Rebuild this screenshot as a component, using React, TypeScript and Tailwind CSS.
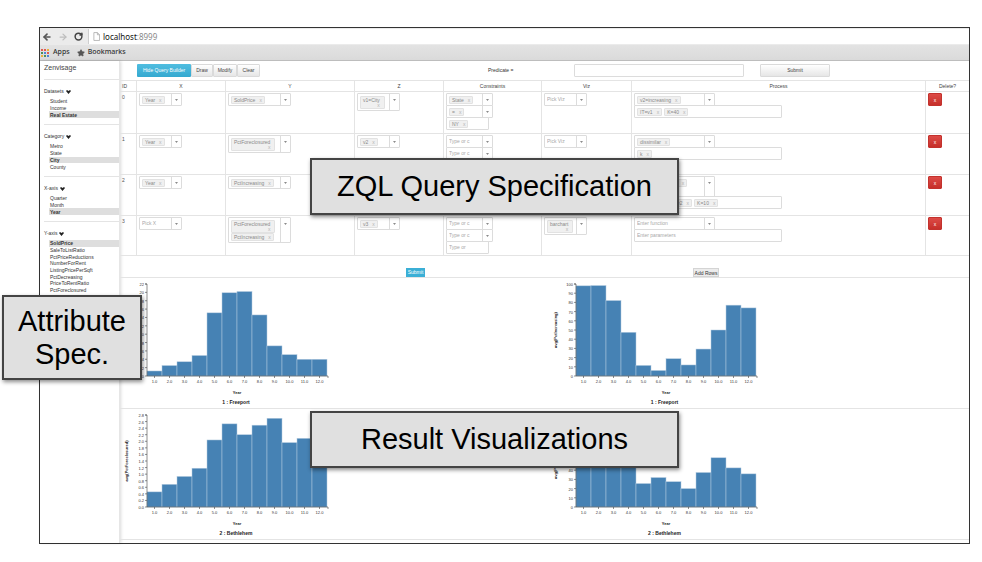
import React from "react";
import { ArrowLeft, ArrowRight, RotateCw, Star } from "lucide-react";

const cx = (...c: (string | false | undefined)[]) => c.filter(Boolean).join(" ");

type TagInfo = { text: string; tall?: boolean };

function Tag({ text, tall }: TagInfo) {
  return (
    <span
      className={cx(
        "flex rounded-[1px] border border-[#e2e2e2] bg-[#f0f0f0] pl-[2px] text-[#8a8a8a]",
        tall ? "h-[13px] flex-col pr-[4px]" : "h-[8px] items-center gap-[4px] pr-[2px]"
      )}
    >
      <span className="whitespace-nowrap leading-[6px]">{text}</span>
      <button
        className={cx("leading-[5px] text-[#b5b5b5]", tall && "self-end")}
        aria-label={"Remove " + text}
      >
        x
      </button>
    </span>
  );
}

type BoxProps = {
  tags?: TagInfo[];
  placeholder?: string;
  label: string;
  width: string;
  arrow?: boolean;
  tall?: string;
};

function TagBox({ tags, placeholder, label, width, arrow = true, tall }: BoxProps) {
  return (
    <div
      className={cx(
        "-mb-px flex rounded-[1px] border border-[#dcdcdc] bg-white text-[5px]",
        width,
        tall || "min-h-[13px]"
      )}
    >
      <div className="flex min-w-0 flex-1 flex-wrap content-start items-start gap-x-[2px] pb-px pl-[2px] pt-[2px]">
        {tags ? (
          tags.map((t) => <Tag key={t.text} {...t} />)
        ) : (
          <input
            aria-label={label}
            placeholder={placeholder}
            className="h-[7px] w-full bg-transparent leading-[7px] outline-none placeholder:text-[#a8a8a8]"
          />
        )}
      </div>
      {arrow && (
        <button
          aria-label={"Open " + label}
          className="flex w-[10px] justify-center border-l border-[#dcdcdc] pt-[5px]"
        >
          <svg viewBox="0 0 4 2" className="h-[2px] w-[3px]">
            <path d="M0 0h4L2 2z" fill="#666" />
          </svg>
        </button>
      )}
    </div>
  );
}

type Cell = { tags?: TagInfo[]; placeholder?: string; tall?: string };
type Row = { x: Cell; y: Cell; z: Cell; constraints: Cell[]; viz: Cell; process: Cell[] };

const tag = (text: string, tall = false): TagInfo => ({ text, tall });
const openConstraints: Cell[] = [
  { placeholder: "Type or c" },
  { placeholder: "Type or c" },
  { placeholder: "Type or" },
];

const rows: Row[] = [
  {
    x: { tags: [tag("Year")] },
    y: { tags: [tag("SoldPrice")] },
    z: { tags: [tag("v1=City", true)] },
    constraints: [{ tags: [tag("State")] }, { tags: [tag("=")] }, { tags: [tag("NY")] }],
    viz: { placeholder: "Pick Viz" },
    process: [{ tags: [tag("v2=increasing")] }, { tags: [tag("IT=v1"), tag("K=40")] }],
  },
  {
    x: { tags: [tag("Year")] },
    y: { tags: [tag("PctForeclosured", true)] },
    z: { tags: [tag("v2")] },
    constraints: openConstraints,
    viz: { placeholder: "Pick Viz" },
    process: [{ tags: [tag("dissimilar")] }, { tags: [tag("k")] }],
  },
  {
    x: { tags: [tag("Year")] },
    y: { tags: [tag("PctIncreasing")] },
    z: { tags: [tag("v2")] },
    constraints: openConstraints,
    viz: { placeholder: "Pick Viz" },
    process: [
      { tags: [tag("v3=dissimilar(v2)")], tall: "h-[21px]" },
      { tags: [tag("IT=v1"), tag("IT2=v2"), tag("K=10")] },
    ],
  },
  {
    x: { placeholder: "Pick X" },
    y: { tags: [tag("PctForeclosured", true), tag("PctIncreasing")] },
    z: { tags: [tag("v3")] },
    constraints: openConstraints,
    viz: { tags: [tag("barchart", true)] },
    process: [{ placeholder: "Enter function" }, { placeholder: "Enter parameters" }],
  },
];

const columns = [
  ["ID", "w-[17px]"],
  ["X", "w-[89px]"],
  ["Y", "w-[129px]"],
  ["Z", "w-[89px]"],
  ["Constraints", "w-[98px]"],
  ["Viz", "w-[90px]"],
  ["Process", ""],
  ["Delete?", "w-[43px]"],
];

const td = "border-b border-r border-[#e4e4e4] pl-[2px] pt-[1px] align-top last:border-r-0";

function QueryTable() {
  return (
    <table className="w-full table-fixed border-separate border-spacing-0 text-[5px] leading-[6px]">
      <thead>
        <tr className="h-[12px]">
          {columns.map(([name, width]) => (
            <th
              key={name}
              className={cx(
                "border-b border-r border-t border-[#e4e4e4] p-0 text-center font-normal text-[#444] last:border-r-0 first:pl-[2px] first:text-left",
                width
              )}
            >
              {name}
            </th>
          ))}
        </tr>
      </thead>
      <tbody>
        {rows.map((r, i) => (
          <tr key={i} className="h-[41px] first:h-[42px] last:h-[40px]">
            <td className="border-b border-r border-[#e4e4e4] pl-[2px] pt-[2px] align-top text-[#555]">{i}</td>
            <td className={td}>
              <TagBox label="X" width="w-[43px]" {...r.x} />
            </td>
            <td className={td}>
              <TagBox label="Y" width="w-[63px]" {...r.y} />
            </td>
            <td className={td}>
              <TagBox label="Z" width="w-[43px]" {...r.z} />
            </td>
            <td className={td}>
              {r.constraints.map((c, k) => (
                <TagBox key={k} label="Constraint" width={k < 2 ? "w-[47px]" : "w-[43px]"} arrow={k < 2} {...c} />
              ))}
            </td>
            <td className={td}>
              <TagBox label="Viz" width="w-[43px]" {...r.viz} />
            </td>
            <td className={td}>
              {r.process.map((c, k) => (
                <TagBox key={k} label="Process" width={k === 0 ? "w-[81px]" : "w-[148px]"} arrow={k === 0} {...c} />
              ))}
            </td>
            <td className={td}>
              <button className="flex h-[13px] w-[14px] items-center justify-center rounded-[1px] border border-[#c3322d] bg-linear-to-b from-[#dd4a46] to-[#c62f2a] text-[5px] text-white">
                x
              </button>
            </td>
          </tr>
        ))}
      </tbody>
    </table>
  );
}

type ChartProps = {
  caption: string;
  yLabel: string;
  max: number;
  step: number;
  digits?: number;
  values: number[];
};

function Chart({ caption, yLabel, max, step, digits = 0, values }: ChartProps) {
  const top = 6;
  const bottom = 98;
  const left = 27;
  const bar = 15;
  const y = (v: number) => bottom - (v / max) * (bottom - top);
  const ticks = Array.from({ length: Math.round(max / step) + 1 }, (_, i) => i * step);
  const right = left + bar * values.length;
  return (
    <figure className="h-[130px] w-[232px]">
      <svg viewBox="0 0 232 120" className="h-[120px] w-[232px]" fontFamily="Liberation Sans, sans-serif">
        {values.map((v, i) => (
          <rect
            key={i}
            x={left + i * bar}
            y={y(v)}
            width={bar}
            height={bottom - y(v)}
            fill="#4682b4"
            stroke="#b4cbe0"
            strokeWidth="0.5"
          />
        ))}
        <path
          d={`M${left - 2} ${top}H${left}V${bottom}H${right + 1}v2`}
          fill="none"
          stroke="#444"
          strokeWidth="0.6"
        />
        {ticks.map((t) => (
          <g key={t}>
            <path d={`M${left - 2} ${y(t)}h2`} stroke="#444" strokeWidth="0.6" />
            <text x={left - 3} y={y(t) + 2} fontSize="4" textAnchor="end" fill="#333">
              {t.toFixed(digits)}
            </text>
          </g>
        ))}
        {values.map((_, i) => {
          const x = left + i * bar + bar / 2;
          return (
            <g key={i}>
              <path d={`M${x} ${bottom}v2`} stroke="#444" strokeWidth="0.6" />
              <text x={x} y="105" fontSize="4" textAnchor="middle" fill="#333">
                {(i + 1).toFixed(1)}
              </text>
            </g>
          );
        })}
        <text x="117" y="116" fontSize="4" fontWeight="bold" textAnchor="middle" fill="#222">
          Year
        </text>
        <text
          transform="translate(8 52) rotate(-90)"
          fontSize="4"
          fontWeight="bold"
          textAnchor="middle"
          fill="#222"
        >
          {yLabel}
        </text>
      </svg>
      <figcaption className="text-center text-[5px] font-bold leading-[8px] text-[#222]">{caption}</figcaption>
    </figure>
  );
}

const charts: ChartProps[][] = [
  [
    {
      caption: "1 : Freeport",
      yLabel: "avg(SoldPrice)",
      max: 22,
      step: 2,
      values: [1.2, 2.5, 3.4, 4.9, 15.1, 19.9, 20.2, 14.6, 7.2, 5.1, 4, 4],
    },
    {
      caption: "1 : Freeport",
      yLabel: "avg(PctIncreasing)",
      max: 100,
      step: 10,
      values: [98, 98.3, 82, 47.5, 11.5, 6, 18.8, 12, 29.3, 50, 77, 74],
    },
  ],
  [
    {
      caption: "2 : Bethlehem",
      yLabel: "avg(PctForeclosured)",
      max: 2.8,
      step: 0.2,
      digits: 1,
      values: [0.46, 0.69, 0.93, 1.18, 2.04, 2.53, 2.2, 2.49, 2.7, 1.96, 2.09, 2.05],
    },
    {
      caption: "2 : Bethlehem",
      yLabel: "avg(PctIncreasing)",
      max: 100,
      step: 10,
      values: [68, 70, 66, 60, 25.5, 32, 27.5, 20, 37.5, 53.5, 42.5, 36],
    },
  ],
];

type Group = { title: string; size: string; items: string[]; selected: string };

const groups: Group[] = [
  { title: "Datasets", size: "h-[20px]", items: ["Student", "Income", "Real Estate"], selected: "Real Estate" },
  { title: "Category", size: "h-[27px]", items: ["Metro", "State", "City", "County"], selected: "City" },
  { title: "X-axis", size: "h-[20px]", items: ["Quarter", "Month", "Year"], selected: "Year" },
  {
    title: "Y-axis",
    size: "h-[60px]",
    items: [
      "SoldPrice",
      "SaleToListRatio",
      "PctPriceReductions",
      "NumberForRent",
      "ListingPricePerSqft",
      "PctDecreasing",
      "PriceToRentRatio",
      "PctForeclosured",
      "MarketPrice",
    ],
    selected: "SoldPrice",
  },
];

function Sidebar() {
  return (
    <aside className="w-[80px] shrink-0 border-r border-[#e6e6e6] pl-[4px] text-[5px] text-[#333] shadow-[1px_0_3px_rgba(0,0,0,0.15)]">
      <h1 className="h-[18px] pt-[3px] text-[7px] leading-[8px] text-[#444]">Zenvisage</h1>
      {groups.map((g) => (
        <section key={g.title} className="border-t border-[#e4e4e4] pb-[6px] pt-[8px]">
          <h2 className="mb-[3px] flex h-[7px] items-center gap-[2px] leading-[7px]">
            {g.title}
            <svg viewBox="0 0 10 8" className="h-[4px] w-[5px]">
              <path d="M0 2L2 0l3 2 3-2 2 2-5 6z" fill="#222" />
            </svg>
          </h2>
          <ul className={cx("grid auto-rows-fr", g.size)}>
            {g.items.map((item) => (
              <li
                key={item}
                className={cx(
                  "ml-[5px] flex items-center pl-[1px] leading-[6px]",
                  item === g.selected && "bg-[#dedede] font-bold"
                )}
              >
                {item}
              </li>
            ))}
          </ul>
        </section>
      ))}
    </aside>
  );
}

const appColors = ["#e05a4f", "#e05a4f", "#e8b23c", "#4c8f5b", "#4f86d6", "#e05a4f", "#e8b23c", "#4c8f5b", "#4f86d6"];

function BrowserChrome() {
  return (
    <header className="border-b border-[#bdbdbd] bg-[#ebebeb] font-['Noto_Sans',sans-serif]">
      <div className="flex h-[17px] items-center">
        <button aria-label="Back" className="ml-[2px]">
          <ArrowLeft className="size-[10px] text-[#555]" strokeWidth={4} />
        </button>
        <button aria-label="Forward" className="ml-[6px]">
          <ArrowRight className="size-[10px] text-[#bdbdbd]" strokeWidth={3} />
        </button>
        <button aria-label="Reload" className="ml-[6px]">
          <RotateCw className="size-[9px] text-[#444]" strokeWidth={4} />
        </button>
        <div className="ml-[5px] flex h-[15px] flex-1 items-center border-l border-[#cfcfcf] bg-white pl-[4px]">
          <svg viewBox="0 0 8 10" className="h-[9px] w-[7px]">
            <path d="M1 .5h4L7.500 3v6.500H1zM5 .5V3h2.500" fill="none" stroke="#aaa" strokeWidth="0.9" />
          </svg>
          <span className="ml-[3px] text-[8px] leading-[12px] text-[#888]">
            <span className="text-[#111]">localhost</span>:8999
          </span>
        </div>
      </div>
      <nav className="flex h-[15px] items-center bg-linear-to-b from-[#e3e3e3] to-[#dadada] text-[7px] font-medium text-[#333]">
        <a href="#apps" className="flex items-center gap-[4px] pl-[1px]">
          <svg viewBox="0 0 8 8" className="size-[8px]">
            {appColors.map((c, i) => (
              <rect key={i} x={(i % 3) * 3} y={Math.floor(i / 3) * 3} width="2" height="2" fill={c} />
            ))}
          </svg>
          Apps
        </a>
        <a href="#bookmarks" className="ml-[7px] flex items-center gap-[3px]">
          <Star className="size-[8px] fill-[#555] text-[#555]" />
          Bookmarks
        </a>
      </nav>
    </header>
  );
}

const grayButton = "h-[13px] rounded-[1px] border border-[#dadada] bg-linear-to-b from-white to-[#e6e6e6] text-[#444]";

function QueryToolbar() {
  return (
    <div className="flex h-[19px] items-center pl-[17px] pr-[139px] text-[5px]">
      <button className="h-[13px] w-[54px] rounded-[1px] bg-linear-to-b from-[#4fbde0] to-[#34a9d0] text-white">
        Hide Query Builder
      </button>
      <button className={cx(grayButton, "w-[22px]")}>Draw</button>
      <button className={cx(grayButton, "w-[24px]")}>Modify</button>
      <button className={cx(grayButton, "w-[23px]")}>Clear</button>
      <label htmlFor="predicate" className="ml-[228px] w-[86px] text-[#333]">
        Predicate =
      </label>
      <input id="predicate" className="h-[13px] min-w-0 flex-1 rounded-[1px] border border-[#dcdcdc] px-[2px] outline-none" />
      <button className={cx(grayButton, "ml-[16px] w-[70px]")}>Submit</button>
    </div>
  );
}

function Callout({ className, children }: { className: string; children: React.ReactNode }) {
  return (
    <div
      className={cx(
        "absolute flex items-center justify-center border-2 border-[#444] bg-[#e0e0e0] text-center text-[29px] leading-[33px] text-black shadow-[1px_2px_4px_rgba(0,0,0,0.45)]",
        className
      )}
    >
      {children}
    </div>
  );
}

export default function App() {
  return (
    <div className="relative min-h-screen bg-white pb-[18px] pl-[39px] pr-[12px] pt-[27px] font-['Liberation_Sans',Arial,sans-serif]">
      <div className="border border-[#333]">
        <BrowserChrome />
        <div className="flex">
          <Sidebar />
          <main className="min-w-0 flex-1 pb-[3px]">
            <QueryToolbar />
            <QueryTable />
            <div className="flex h-[22px] items-end gap-[268px] border-b border-[#e4e4e4] pl-[286px] text-[5px]">
              <button className="h-[9px] w-[19px] bg-[#3bafd6] leading-[7px] text-white">Submit</button>
              <button className="h-[9px] w-[26px] border border-[#d4d4d4] bg-[#ececec] leading-[6px] text-[#333]">
                Add Rows
              </button>
            </div>
            {charts.map((pair, i) => (
              <div key={i} className="grid grid-cols-2 gap-x-[8px] border-b border-[#e4e4e4]">
                {pair.map((c) => (
                  <Chart key={c.yLabel} {...c} />
                ))}
              </div>
            ))}
          </main>
        </div>
      </div>
      <Callout className="left-[310px] top-[158px] h-[57px] w-[369px]">ZQL Query Specification</Callout>
      <Callout className="left-[2px] top-[295px] h-[85px] w-[140px]">
        Attribute
        <br />
        Spec.
      </Callout>
      <Callout className="left-[310px] top-[411px] h-[57px] w-[369px]">Result Visualizations</Callout>
    </div>
  );
}
